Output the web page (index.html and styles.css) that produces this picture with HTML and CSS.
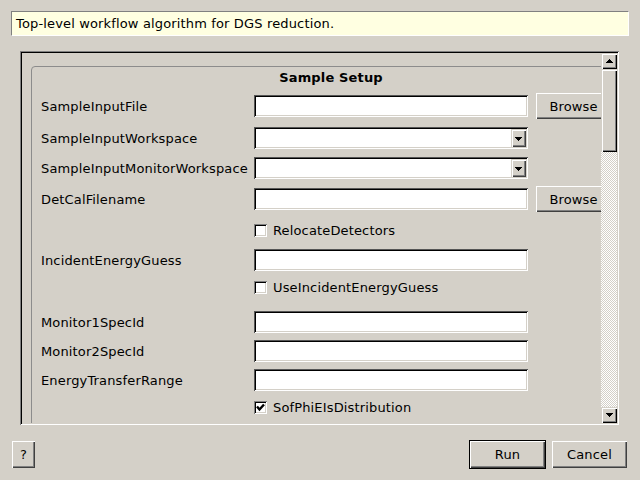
FILE: index.html
```html
<!DOCTYPE html>
<html>
<head>
<meta charset="utf-8">
<link rel="stylesheet" href="styles.css">
</head>
<body>
<div class="dialog">
  <div class="desc">Top-level workflow algorithm for DGS reduction.</div>
  <div class="scrollarea">
    <div class="viewport">
      <div class="group">
        <div class="gtitle">Sample Setup</div>
        <div class="row r1"><span class="lbl">SampleInputFile</span><span class="edit"></span><span class="btn browse">Browse</span></div>
        <div class="row r2"><span class="lbl">SampleInputWorkspace</span><span class="edit combo"><span class="drop"><svg width="7" height="4" viewBox="0 0 7 4" shape-rendering="crispEdges"><polygon points="0,0 7,0 4,4 3,4" fill="#000"/></svg></span></span></div>
        <div class="row r3"><span class="lbl">SampleInputMonitorWorkspace</span><span class="edit combo"><span class="drop"><svg width="7" height="4" viewBox="0 0 7 4" shape-rendering="crispEdges"><polygon points="0,0 7,0 4,4 3,4" fill="#000"/></svg></span></span></div>
        <div class="row r4"><span class="lbl">DetCalFilename</span><span class="edit"></span><span class="btn browse">Browse</span></div>
        <div class="cbrow c1"><span class="cb"></span><span class="cblbl">RelocateDetectors</span></div>
        <div class="row r5"><span class="lbl">IncidentEnergyGuess</span><span class="edit"></span></div>
        <div class="cbrow c2"><span class="cb"></span><span class="cblbl">UseIncidentEnergyGuess</span></div>
        <div class="row r6"><span class="lbl">Monitor1SpecId</span><span class="edit"></span></div>
        <div class="row r7"><span class="lbl">Monitor2SpecId</span><span class="edit"></span></div>
        <div class="row r8"><span class="lbl">EnergyTransferRange</span><span class="edit"></span></div>
        <div class="cbrow c3"><span class="cb"><svg width="13" height="13" viewBox="0 0 13 13"><polyline points="3,5.5 5.5,8.5 10,3.5" fill="none" stroke="#000" stroke-width="2.4"/></svg></span><span class="cblbl">SofPhiEIsDistribution</span></div>
      </div>
    </div>
    <div class="vscroll">
      <div class="arrow"><svg width="7" height="4" viewBox="0 0 7 4" shape-rendering="crispEdges"><polygon points="3,0 4,0 7,4 0,4" fill="#000"/></svg></div>
      <div class="track"><div class="thumb"></div></div>
      <div class="arrow"><svg width="7" height="4" viewBox="0 0 7 4" shape-rendering="crispEdges"><polygon points="0,0 7,0 4,4 3,4" fill="#000"/></svg></div>
    </div>
  </div>
  <div class="footer">
    <span class="btn help">?</span>
    <span class="spacer"></span>
    <span class="btn run">Run</span>
    <span class="btn cancel">Cancel</span>
  </div>
</div>
</body>
</html>
```
FILE: styles.css
```css
* { box-sizing: border-box; }
html, body { margin: 0; padding: 0; }
body {
  width: 640px;
  height: 480px;
  background: #d4d0c8;
  font-family: "DejaVu Sans", sans-serif;
  font-size: 13px;
  letter-spacing: 0.15px;
  color: #000;
  overflow: hidden;
}
.dialog { display: flex; flex-direction: column; height: 480px; }
.desc {
  margin: 11px 11px 0 11px;
  height: 25px;
  background: #ffffe1;
  border: 1px solid;
  border-color: #808080 #ffffff #ffffff #808080;
  padding-left: 4px;
  line-height: 23px;
  white-space: nowrap;
}
.scrollarea {
  margin: 15px 0 0 20px;
  width: 599px;
  height: 374px;
  padding: 2px;
  display: flex;
  box-shadow: inset 1px 1px #808080, inset -1px -1px #ffffff, inset 2px 2px #000000, inset -2px -2px #d4d0c8;
}
.viewport { flex: 1; min-width: 0; overflow: hidden; }
.group {
  margin: 13px 0 0 9px;
  width: 600px;
  height: 420px;
  border: 1px solid #8c8c8c;
  border-radius: 4px;
  padding: 3px 0 0 9px;
}
.gtitle {
  margin-left: -9px;
  text-align: center;
  font-weight: bold;
  line-height: 16px;
  height: 16px;
}
.row { display: flex; align-items: center; height: 22px; }
.lbl { width: 213px; flex-shrink: 0; white-space: nowrap; }
.edit {
  width: 274px;
  height: 22px;
  flex-shrink: 0;
  background: #fff;
  box-shadow: inset 1px 1px #555555, inset -1px -1px #ffffff, inset 2px 2px #000000, inset -2px -2px #d4d0c8;
}
.combo { display: flex; justify-content: flex-end; padding: 2px; }
.drop {
  width: 15px;
  height: 18px;
  background: #d4d0c8;
  display: flex;
  align-items: center;
  justify-content: center;
  box-shadow: inset 1px 1px #d4d0c8, inset 2px 2px #ffffff, inset -1px -1px #404040, inset -2px -2px #808080;
}
.drop svg { display: block; margin-top: 1px; }
.btn {
  display: flex;
  align-items: center;
  justify-content: center;
  flex-shrink: 0;
  background: #d4d0c8;
  box-shadow: inset 1px 1px #ffffff, inset -1px -1px #404040, inset -2px -2px #808080;
  white-space: nowrap;
}
.browse { margin-left: 8px; width: 75px; height: 26px; }
.r1 { margin-top: 9px; }
.r2 { margin-top: 10px; }
.r3 { margin-top: 8px; }
.r4 { margin-top: 9px; }
.c1 { margin-top: 14px; }
.r5 { margin-top: 12px; }
.c2 { margin-top: 10px; }
.r6 { margin-top: 17px; }
.r7 { margin-top: 7px; }
.r8 { margin-top: 7px; }
.c3 { margin-top: 10px; }
.cbrow { display: flex; align-items: center; height: 13px; padding-left: 213px; }
.cb {
  width: 13px;
  height: 13px;
  flex-shrink: 0;
  background: #fff;
  box-shadow: inset 1px 1px #808080, inset -1px -1px #ffffff, inset 2px 2px #000000, inset -2px -2px #d4d0c8;
}
.cb svg { display: block; }
.cblbl { margin-left: 6px; white-space: nowrap; }
.vscroll { width: 16px; flex-shrink: 0; display: flex; flex-direction: column; }
.arrow {
  height: 16px;
  flex-shrink: 0;
  display: flex;
  align-items: center;
  justify-content: center;
  background: #d4d0c8;
  box-shadow: inset 1px 1px #d4d0c8, inset 2px 2px #ffffff, inset -1px -1px #000000, inset -2px -2px #808080;
}
.track {
  flex: 1;
  background-image: repeating-conic-gradient(#ffffff 0% 25%, #d4d0c8 0% 50%);
  background-size: 2px 2px;
}
.thumb {
  height: 83px;
  background: #d4d0c8;
  box-shadow: inset 1px 1px #d4d0c8, inset 2px 2px #ffffff, inset -1px -1px #000000, inset -2px -2px #808080;
}
.footer {
  display: flex;
  align-items: flex-start;
  margin-top: 16px;
  padding: 0 13px 0 12px;
}
.help { width: 23px; height: 27px; }
.spacer { flex: 1; }
.run { width: 75px; height: 27px; outline: 1px solid #000; }
.cancel { width: 75px; height: 27px; margin-left: 7px; }
```
